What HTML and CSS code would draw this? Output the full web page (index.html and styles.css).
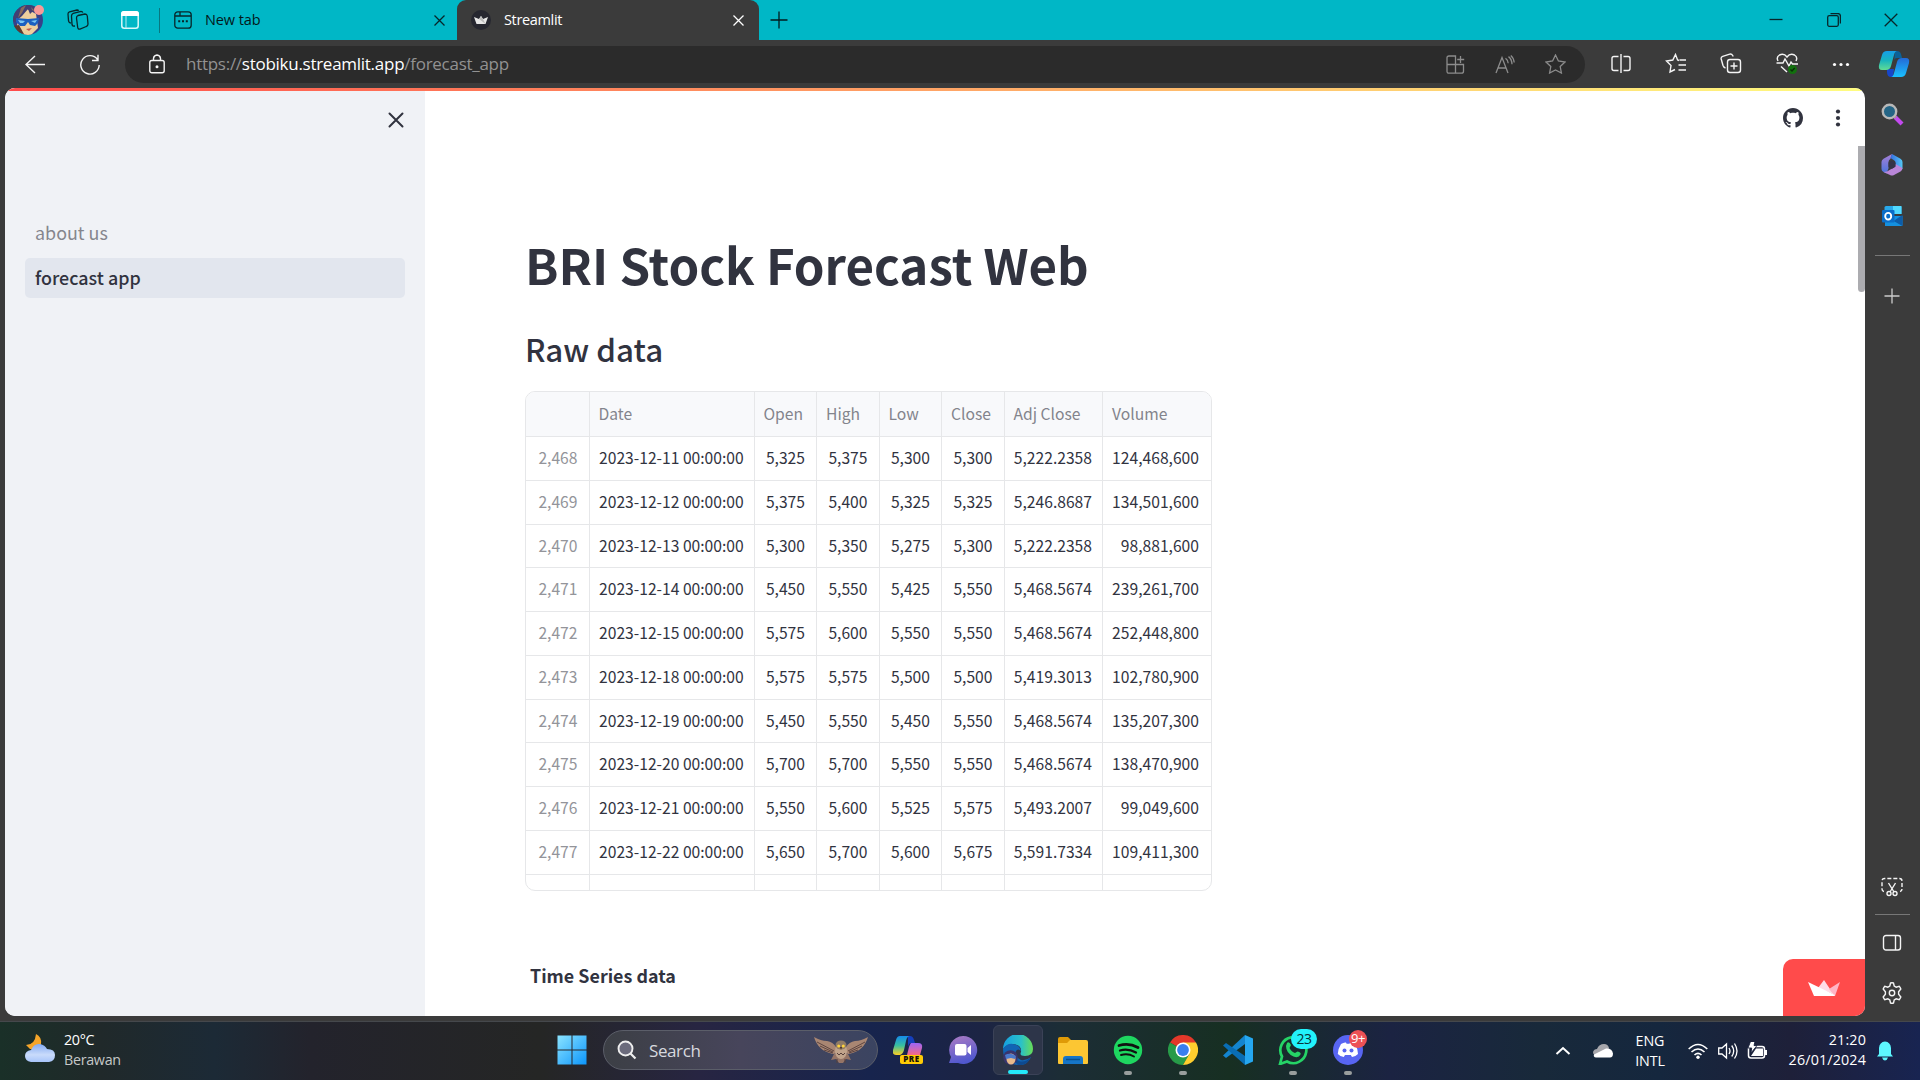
FILE: index.html
```html
<!DOCTYPE html>
<html lang="en">
<head>
<meta charset="utf-8">
<title>Streamlit</title>
<link rel="stylesheet" href="styles.css">
</head>
<body>
<div class="desktop">
<header class="tabstrip">
  <svg class="avatar" width="32" height="32" viewBox="0 0 32 32"><clipPath id="av"><circle cx="16" cy="16" r="15"/></clipPath><g clip-path="url(#av)"><rect width="32" height="32" fill="#38418a"/><path d="M7 9 15 5l9 5 2 14-8 8h-6L5 22z" fill="#efcf9d"/><path d="M2 0h23l3 12-7-5-3 3-2-5-6 7-7 6-4-1z" fill="#414073"/><path d="M9 4l5-3-4 8-4 5zM19 3l5 5-4-2z" fill="#8a6b5c"/><path d="M1 22l6-1 6 11H3z" fill="#5d3b31"/><path d="M4 14l12 1 11-1-1 5-3 3-5-1-2-3-3 4-5 0-4-4z" fill="#1c5fc0"/><path d="M6 16l7 1-2 2H8zM19 17l6-1-2 3z" fill="#7cc6f3"/><path d="M14 25l6-1-3 3z" fill="#bf594e"/></g><circle cx="27" cy="6" r="5" fill="#f79a98"/></svg>
  <svg class="workspaces ink" width="22" height="22" viewBox="0 0 22 22"><path d="M11 6.500 18 5q2 0 2.300 2l.7 8q0 2-1.800 2.500l-6.200 2.600q-2 .4-2.300-1.600L9.500 9q0-2 1.500-2.500zM8 17l-1.500.2q-1.200-.2-1.500-1.700L4.500 7q0-2 1.700-2.600L14 2.400q1.500 0 1.800 1.200M4 14l-1.300-.3Q1.700 13 1.500 11.700L1 5q0-1.700 1.500-2.200L10 1q1.300 0 1.700.7"/></svg>
  <svg class="verticaltabs" width="18" height="18" viewBox="0 0 18 18"><rect x=".8" y=".8" width="16.400" height="16.400" rx="2.500" fill="none" stroke="#d9f8fa" stroke-width="1.500"/><path d="M0 5V3q0-3 3-3h12q3 0 3 3v2z" fill="#fff"/><path d="M5 5v12" stroke="#b8eef2"/></svg>
  <i class="rule"></i>
  <div class="tab idle">
    <svg class="ink" width="18" height="18" viewBox="0 0 18 18"><rect x=".8" y=".8" width="16.400" height="16.400" rx="3"/><path d="M1 5h5V1M6 5h11"/><path d="M4.200 10.200h2M8 10.200h2M11.800 10.200h2" stroke-width="2"/></svg>
    <span>New tab</span>
    <svg class="x ink" width="11" height="11" viewBox="0 0 11 11"><path d="m.5.500 10 10m0-10-10 10"/></svg>
  </div>
  <div class="tab active">
    <svg width="20" height="20" viewBox="0 0 20 20"><circle cx="10" cy="10" r="10" fill="#262730"/><path d="m3 7 5 2 2-3 2 3 5-2-2.500 7h-9z" fill="#e8e8e8"/><path d="m8 9 2-3 2 3 2.500 5z" fill="#bbb"/></svg>
    <span>Streamlit</span>
    <svg class="x" width="11" height="11" viewBox="0 0 11 11"><path d="m.5.500 10 10m0-10-10 10" stroke="#fff" stroke-width="1.300"/></svg>
  </div>
  <svg class="newtab ink" width="18" height="18" viewBox="0 0 18 18"><path d="M9 .5v17M.5 9h17"/></svg>
  <div class="window-buttons">
    <svg class="ink" width="14" height="14" viewBox="0 0 14 14"><path d="M.5 6.500h13"/></svg>
    <svg class="ink" width="14" height="14" viewBox="0 0 14 14"><rect x=".7" y="2.700" width="10.600" height="10.600" rx="1.500"/><path d="M3.500.6H11q2.400 0 2.400 2.400v7.500"/></svg>
    <svg class="ink" width="14" height="14" viewBox="0 0 14 14"><path d="m.7.700 12.600 12.600m0-12.600L.7 13.300"/></svg>
  </div>
</header>

<nav class="toolbar">
  <svg class="back light" width="20" height="19" viewBox="0 0 20 19"><path d="M20 9.500H1M10 1 1 9.500l9 8.500"/></svg>
  <svg class="reload light" width="20" height="21" viewBox="0 0 20 21"><path d="M17.500 5.500A9.200 9.200 0 1 0 19.200 11M18 .8v5.700h-6"/></svg>
  <div class="omnibox">
    <svg class="lock light" width="16" height="20" viewBox="0 0 16 20"><rect x=".8" y="6.500" width="14.400" height="12.300" rx="2"/><path d="M4.500 6.500V4.300q.4-3 3.500-3.300 3.100.3 3.500 3.300v2.200"/><circle cx="8" cy="12.700" r=".8" fill="#fff"/></svg>
    <span class="url">https://<b>stobiku.streamlit.app</b>/forecast_app</span>
    <svg class="dim" width="19" height="19" viewBox="0 0 19 19"><path d="M1 9.500h16.500v6.700q0 2-2 2h-12.500q-2 0-2-2V3q0-2 2-2H9.500v17M14.500 1v7M11.200 4.500h7"/></svg>
    <svg class="dim" width="20" height="19" viewBox="0 0 20 19"><path d="m1 18 6-15.500L13 18M3 13h8M10.500 3.300q2.500 1.700 2.700 5M13.500 1.600q3.300 2.400 3.500 7.700M15.800.5q3 2.500 3.400 7"/></svg>
    <svg class="dim" width="21" height="20" viewBox="0 0 21 20"><path d="m10.500 1 2.900 6 6.600 1-4.800 4.500 1.200 6.500-5.900-3.100L4.600 19l1.200-6.500L1 8l6.600-1z"/></svg>
  </div>
  <div class="tools">
    <svg class="light" width="22" height="22" viewBox="0 0 22 22"><path d="M8.500 3.500H4q-2 0-2 2v10q0 2 2 2h4.500M13.500 3.500H18q2 0 2 2v10q0 2-2 2h-4.500M11 1v19"/></svg>
    <svg class="light" width="22" height="22" viewBox="0 0 22 22"><path d="M14 7.500 12.600 7 10.500 1.500 7.800 7 1.500 8l4.500 4.500L5 19l5-2.500M14.500 7H21M13.500 12H21M13.500 17H21"/></svg>
    <svg class="light" width="22" height="22" viewBox="0 0 22 22"><rect x="7.500" y="6.500" width="13" height="13" rx="2.500"/><path d="M14 9.500v7M10.500 13h7M5.500 15Q3.700 14.500 3 12.500L1.200 6q-.4-2 1.500-2.700l7-2.200q2-.4 3 1.400l.5 1"/></svg>
    <svg class="light" width="24" height="24" viewBox="0 0 24 24"><path d="M3 9Q1 5 4.500 3 9 1 12 5q3-4 7.500-2Q23 5 21 9M1.500 11H8l2-4 4 7 2-4 1.500 2H23M6 14.500l6 5.500"/><circle cx="17.500" cy="17.500" r="4.500" fill="#12700e" stroke="none"/><path d="m15.500 17.500 1.500 1.500 2.700-3" stroke="#082f08"/></svg>
    <svg class="more" width="22" height="22" viewBox="0 0 22 22" fill="#fff"><circle cx="4.500" cy="11.500" r="1.600"/><circle cx="11" cy="11.500" r="1.600"/><circle cx="17.500" cy="11.500" r="1.600"/></svg>
    <svg class="copilot" width="32" height="28" viewBox="0 0 32 28"><defs><linearGradient id="c1" x2="0" y2="1"><stop stop-color="#169ee8"/><stop offset=".5" stop-color="#19b4bd"/><stop offset="1" stop-color="#61dc94"/></linearGradient><linearGradient id="c2" x2="0" y2="1"><stop stop-color="#2469d6"/><stop offset="1" stop-color="#19c1ff"/></linearGradient></defs><path d="M17 1h2q3 0 4 3l1 4h-5q-3 0-3 4z" fill="#0b6298"/><path d="M9 19h7l-1 8h-2q-4 0-4-5z" fill="#1746ca"/><path d="M9 1h10q-2 0-3 4l-3 11q-1 4-5 4H4q-4 0-3-5L4 5q1-4 5-4z" fill="url(#c1)"/><path d="M23 27H13q2 0 3-4l3-11q1-4 5-4h4q4 0 3 5l-3 10q-1 4-5 4z" fill="url(#c2)"/></svg>
  </div>
</nav>

<div class="browser-body">
  <div class="page">
    <aside class="app-sidebar">
      <svg class="sidebar-close" width="16" height="16" viewBox="0 0 16 16"><path d="m1.500 1.500 13 13m0-13-13 13" stroke="#31333f" stroke-width="2" stroke-linecap="round"/></svg>
      <div class="links"><a>about us</a><a class="current">forecast app</a></div>
    </aside>
    <main class="app-main">
      <div class="app-header">
        <svg width="20" height="20" viewBox="0 0 16 16" fill="#31333f"><path d="M8 0C3.580 0 0 3.580 0 8c0 3.540 2.290 6.530 5.470 7.590.4.070.55-.17.55-.38 0-.19-.01-.82-.01-1.490-2.010.37-2.530-.49-2.690-.94-.09-.23-.48-.94-.82-1.130-.28-.15-.68-.52-.01-.53.63-.01 1.080.58 1.230.82.72 1.210 1.870.87 2.330.66.07-.52.28-.87.51-1.070-1.780-.2-3.640-.89-3.640-3.950 0-.87.31-1.590.82-2.150-.08-.2-.36-1.020.08-2.120 0 0 .67-.21 2.200.82.64-.18 1.320-.27 2-.27s1.360.09 2 .27c1.530-1.040 2.200-.82 2.200-.82.44 1.100.16 1.920.08 2.120.51.56.82 1.270.82 2.150 0 3.070-1.870 3.750-3.650 3.950.29.25.54.73.54 1.480 0 1.070-.01 1.930-.01 2.200 0 .21.15.46.55.38A8.010 8.010 0 0 0 16 8c0-4.420-3.580-8-8-8z"/></svg>
        <svg width="6" height="20" viewBox="0 0 6 20" fill="#31333f"><circle cx="3" cy="3.500" r="2.100"/><circle cx="3" cy="10" r="2.100"/><circle cx="3" cy="16.500" r="2.100"/></svg>
      </div>
      <h1>BRI Stock Forecast Web</h1>
      <h2>Raw data</h2>
      <table class="frame">
        <thead><tr><th></th><th>Date</th><th>Open</th><th>High</th><th>Low</th><th>Close</th><th>Adj Close</th><th>Volume</th></tr></thead>
        <tbody>
        <tr><td>2,468</td><td>2023-12-11 00:00:00</td><td>5,325</td><td>5,375</td><td>5,300</td><td>5,300</td><td>5,222.2358</td><td>124,468,600</td></tr>
        <tr><td>2,469</td><td>2023-12-12 00:00:00</td><td>5,375</td><td>5,400</td><td>5,325</td><td>5,325</td><td>5,246.8687</td><td>134,501,600</td></tr>
        <tr><td>2,470</td><td>2023-12-13 00:00:00</td><td>5,300</td><td>5,350</td><td>5,275</td><td>5,300</td><td>5,222.2358</td><td>98,881,600</td></tr>
        <tr><td>2,471</td><td>2023-12-14 00:00:00</td><td>5,450</td><td>5,550</td><td>5,425</td><td>5,550</td><td>5,468.5674</td><td>239,261,700</td></tr>
        <tr><td>2,472</td><td>2023-12-15 00:00:00</td><td>5,575</td><td>5,600</td><td>5,550</td><td>5,550</td><td>5,468.5674</td><td>252,448,800</td></tr>
        <tr><td>2,473</td><td>2023-12-18 00:00:00</td><td>5,575</td><td>5,575</td><td>5,500</td><td>5,500</td><td>5,419.3013</td><td>102,780,900</td></tr>
        <tr><td>2,474</td><td>2023-12-19 00:00:00</td><td>5,450</td><td>5,550</td><td>5,450</td><td>5,550</td><td>5,468.5674</td><td>135,207,300</td></tr>
        <tr><td>2,475</td><td>2023-12-20 00:00:00</td><td>5,700</td><td>5,700</td><td>5,550</td><td>5,550</td><td>5,468.5674</td><td>138,470,900</td></tr>
        <tr><td>2,476</td><td>2023-12-21 00:00:00</td><td>5,550</td><td>5,600</td><td>5,525</td><td>5,575</td><td>5,493.2007</td><td>99,049,600</td></tr>
        <tr><td>2,477</td><td>2023-12-22 00:00:00</td><td>5,650</td><td>5,700</td><td>5,600</td><td>5,675</td><td>5,591.7334</td><td>109,411,300</td></tr>
        <tr class="cut"><td></td><td></td><td></td><td></td><td></td><td></td><td></td><td></td></tr>
        </tbody>
      </table>
      <p class="chart-title">Time Series data</p>
      <i class="scroll-thumb"></i>
      <div class="hosted"><svg width="32" height="18" viewBox="0 0 32 18"><path d="m10 9 6-8 6 9 5 6z" fill="#ffdce6"/><path d="m21 10 11-7-5 14z" fill="#ffb5c5"/><path d="m0 3 27 13-.5 1H6z" fill="#fff"/></svg></div>
    </main>
    <i class="gradient"></i>
  </div>

  <aside class="edge-bar">
    <svg width="24" height="24" viewBox="0 0 24 24"><path d="m15 15 7 7" stroke="#c34af0" stroke-width="4.200"/><path d="m13 13 3 3" stroke="#999" stroke-width="2"/><circle cx="9.500" cy="9.500" r="6.700" fill="#246586" stroke="#b8b8b8" stroke-width="2.400"/></svg>
    <svg width="24" height="24" viewBox="0 0 24 24"><defs><linearGradient id="m1" x2="0" y2="1"><stop stop-color="#a77fd6"/><stop offset="1" stop-color="#4a74dc"/></linearGradient><linearGradient id="m2" x2="1"><stop stop-color="#356de0"/><stop offset="1" stop-color="#54c7f5"/></linearGradient></defs><path d="M12 1 3.500 5.800Q1.500 7 1.500 9v7q0 2 2 3l3 1.500 2-5V9q0-2 2-3.200z" fill="url(#m1)"/><path d="m12 1 8.500 4.800q2 1.200 2 3.200v7l-7-4V9.500q0-1.500-1.500-2.300L10.500 5z" fill="url(#m2)"/><path d="M22.500 15q0 2-2 3.500L14 22q-2 1.200-4 0l-6.500-3q4 0 6-2l4.500-2.500q1.500-1 1.500-3.500z" fill="#b986d8"/><path d="M8.500 9.500 12 7.700l3.500 2v4L12 15.800l-3.500-2z" fill="#343447"/></svg>
    <svg width="24" height="24" viewBox="0 0 24 24"><path d="M6 2h14q1.500 0 1.500 1.500V10h-17V3.500Q4.500 2 6 2z" fill="#28a8ea"/><path d="M13 2h8.500v8H13z" fill="#50d9ff"/><path d="M5 12h17.500v9q0 1-1 1H5z" fill="#1490df"/><path d="m22.500 11-9 6 9 5z" fill="#0d5ca8"/><rect x="2" y="6" width="12.500" height="12.500" rx="1" fill="#0a6dc8"/><ellipse cx="8.200" cy="12.200" rx="3" ry="3.300" fill="none" stroke="#fff" stroke-width="1.900"/></svg>
    <i class="divider"></i>
    <svg class="plus" width="16" height="16" viewBox="0 0 16 16"><path d="M8 .5v15M.5 8h15" stroke="#ccc" stroke-width="1.300"/></svg>
    <svg class="light snip" width="24" height="24" viewBox="0 0 24 24"><path stroke-dasharray="4 2" d="M4 16.500Q2 16 2 14V6q0-2.500 2.500-2.500h15Q22 3.500 22 6v8q0 2-2 2.500"/><path d="m8.500 8 5.500 9M15.500 8 10 17"/><circle cx="9" cy="18.500" r="2"/><circle cx="15" cy="18.500" r="2"/></svg>
    <i class="divider low"></i>
    <svg class="light" width="20" height="18" viewBox="0 0 20 18"><rect x="1.500" y="1.500" width="17" height="14.500" rx="2.500"/><path d="M13.500 1.500V16"/></svg>
    <svg class="light gear" width="24" height="24" viewBox="0 0 24 24"><path d="M9.800 5 10.500 2q1.500-.4 3 0l.7 3 2 1.200 3-.9q1.200 1.200 1.600 2.700L18.600 10.800v2.400l2.200 2.800q-.5 1.500-1.600 2.700l-3-.9-2 1.200-.7 3q-1.500.4-3 0l-.7-3-2-1.200-3 .9Q3.700 17.500 3.200 16l2.200-2.800v-2.400L3.200 8q.5-1.500 1.600-2.700l3 .9z"/><circle cx="12" cy="12" r="2.700"/></svg>
  </aside>
</div>

<footer class="taskbar">
  <div class="weather">
    <svg width="30" height="30" viewBox="0 0 30 30"><path d="M11 1q6 3 5 10-3 7-11 5l-4-4q9 0 10-11z" fill="#f5a52a"/><defs><linearGradient id="cl" x2="0" y2="1"><stop stop-color="#82aaf0"/><stop offset=".6" stop-color="#c9dbfb"/><stop offset="1" stop-color="#a8c5fa"/></linearGradient></defs><path d="M6 29q-6-1-6-6t6-6q3-7 9-6 5 1 7 5 8 0 8 6t-6 7z" fill="url(#cl)"/></svg>
    <div><span>20°C</span><span class="muted">Berawan</span></div>
  </div>
  <svg class="start" width="30" height="30" viewBox="0 0 30 30"><defs><linearGradient id="w" x2="1" y2="1"><stop stop-color="#8be4ff"/><stop offset="1" stop-color="#0c95fb"/></linearGradient></defs><path fill="url(#w)" d="M.5.500h14v14H.5zM15.500.500h14v14h-14zM.5 15.500h14v14H.5zM15.500 15.500h14v14h-14z"/></svg>
  <div class="search">
    <svg width="20" height="20" viewBox="0 0 20 20"><circle cx="8.500" cy="8.500" r="7" fill="#6b6b7c" stroke="#eee" stroke-width="1.900"/><path d="m13.500 13.500 5 5" stroke="#eee" stroke-width="2.200"/></svg>
    <span>Search</span>
    <svg class="owl" width="56" height="28" viewBox="0 0 56 28"><path d="M1 1q7 4 13 4 6 1 9 6l2 6-5 1Q5 15 1 1zM55 1q-7 4-13 4-6 1-9 6l-2 6 5 1Q51 15 55 1z" fill="#a98672"/><path d="m4 6 17 9M7 10l13 6M52 6l-17 9m14-5-13 6M11 14l9 3m25-3-9 3" stroke="#5d4541" stroke-width="1"/><path d="m21 18-3 6 5-1 3 4h4l3-4 5 1-3-6z" fill="#957466"/><ellipse cx="28" cy="15" rx="6" ry="8" fill="#c0a38b"/><ellipse cx="28" cy="9" rx="5.500" ry="4.500" fill="#8f7b66"/><circle cx="25.700" cy="10" r="1.500" fill="#ffd43c"/><circle cx="30.300" cy="10" r="1.500" fill="#ffd43c"/><path d="m27 11 1 3 1-3z" fill="#493022"/><path d="m24 17 2 2 2-2 2 2 2-2m-8 6v4m8-4v4" stroke="#57403b" fill="none"/></svg>
  </div>
  <div class="apps">
    <div class="app"><svg width="30" height="30" viewBox="0 0 30 30"><defs><linearGradient id="p1" x2="0" y2="1"><stop stop-color="#158bea"/><stop offset=".5" stop-color="#38bfa0"/><stop offset="1" stop-color="#fccf22"/></linearGradient><linearGradient id="p2" x2="0" y2="1"><stop stop-color="#9c65f5"/><stop offset="1" stop-color="#f66a87"/></linearGradient></defs><path d="M15 1h2q3 0 4 4l1 3h-4q-2 0-3 4z" fill="#153fbd"/><path d="M7 1h10q-3 0-4 5l-2 9q-1 4-4 5H3q-4 0-3-5L3 5q1-4 4-4z" fill="url(#p1)"/><path d="M18 8h7q5 0 4 5l-2 7H14l2-8q1-3 2-4z" fill="url(#p2)"/><rect x="7" y="20" width="23" height="9" rx="2" fill="#ffcb05"/><text class="pre" x="18.500" y="27.400" text-anchor="middle">PRE</text></svg></div>
    <div class="app"><svg width="30" height="30" viewBox="0 0 30 30"><defs><linearGradient id="ch" x2=".3" y2="1"><stop stop-color="#ad7cc3"/><stop offset="1" stop-color="#5058cf"/></linearGradient></defs><path d="M15 1a14 14 0 1 1-5 27H1l2-6A14 14 0 0 1 15 1z" fill="url(#ch)"/><rect x="7" y="9" width="11.500" height="11.500" rx="2" fill="#fff"/><path d="m19.500 13 3.500-3v10l-3.500-3z" fill="#fff"/></svg></div>
    <div class="app selected"><svg width="30" height="30" viewBox="0 0 30 30"><defs><linearGradient id="e1" x2="1"><stop stop-color="#159fe1"/><stop offset=".6" stop-color="#2ac1c9"/><stop offset="1" stop-color="#68dd55"/></linearGradient></defs><path d="M0 14A15 15 0 0 1 30 14q0 7-8 7-6 0-4-4 1-7-8-8Q4 9 0 14z" fill="url(#e1)"/><path d="M0 14q4-6 10-5 7 1 8 7-3-3-5 0-2 6 5 9 5 1 10-3-4 9-13 8Q0 29 0 14z" fill="#1164b4"/><path d="M13 16q-4 6 3 10 6 2 12-4-4 9-13 8-7-6-2-14z" fill="#0e4a90"/><circle cx="7.500" cy="22.500" r="7.300" fill="#39356d"/><ellipse cx="8" cy="24" rx="4.500" ry="5.500" fill="#e8ba8c"/><path d="M2 20q5-3 11 1l-1 3-4-1-5 1z" fill="#4978ca"/></svg><i class="run"></i></div>
    <div class="app"><svg width="30" height="30" viewBox="0 0 30 30"><path d="M0 4q0-2 2-2h8l3 3v6H0z" fill="#df9a07"/><path d="M12 5h16q2 0 2 2v21q0 1-1 1H1q-1 0-1-1V8h9z" fill="#fcc633"/><path d="M5 29v-5q0-3 3-3h14q3 0 3 3v5z" fill="#1675c7"/><path d="M8 24.500h14" stroke="#08508f" stroke-width="1.500"/></svg></div>
    <div class="app"><svg width="30" height="30" viewBox="0 0 30 30" fill="none" stroke="#111" stroke-linecap="round"><circle cx="15" cy="15" r="14.200" fill="#1ed760" stroke="none"/><path d="M6 10.500q10-3 19 2" stroke-width="2.800"/><path d="M7 15.500q8-2.500 16 2" stroke-width="2.300"/><path d="M8 20q7-2 13 1.500" stroke-width="1.900"/></svg><i class="run"></i></div>
    <div class="app"><svg width="30" height="30" viewBox="0 0 30 30"><path d="M15 15 2 7.500A15 15 0 0 1 28 7.500z" fill="#e3382a"/><path d="M15 15 2 7.500A15 15 0 0 0 15 30l6.500-11z" fill="#279b48"/><path d="M15 15l6.500 3.800L15 30A15 15 0 0 0 28 7.500H15z" fill="#ffce2e"/><circle cx="15" cy="15" r="7.500" fill="#fff"/><circle cx="15" cy="15" r="5.900" fill="#397fee"/></svg><i class="run"></i></div>
    <div class="app"><svg width="30" height="30" viewBox="0 0 30 30"><path d="M22 0v9L3 23 0 20.500z" fill="#1485cf"/><path d="m3 8 19 13v9L0 10.500z" fill="#096db4"/><path d="m22 0 8 3.500v23L22 30z" fill="#25a7f0"/></svg></div>
    <div class="app"><svg width="30" height="30" viewBox="0 0 30 30"><path d="M2 29 4 21.500A13 13 0 1 1 9 26.500z" fill="none" stroke="#25d366" stroke-width="2.700"/><path d="M9 8q2-2 4 2l-1.500 3q2 4 5.500 5l2.500-1.500q4 1 3 3-2 4-7 2Q8 18 8 11z" fill="#25d366"/></svg><span class="count">23</span><i class="run"></i></div>
    <div class="app"><svg width="30" height="30" viewBox="0 0 30 30"><circle cx="15" cy="15" r="15" fill="#5865f2"/><path d="M8 9q3-2 5-1.500l.6 1.200h3L17 7.500q3 0 5 1.500 3 5 3 10-3 3-6 3l-1.200-2H12l-1.200 2q-3 0-6-3 0-5 3.200-10z" fill="#fff"/><circle cx="11.500" cy="15.500" r="2" fill="#5865f2"/><circle cx="18.500" cy="15.500" r="2" fill="#5865f2"/></svg><span class="count alert">9+</span><i class="run"></i></div>
  </div>
  <div class="tray">
    <svg width="16" height="10" viewBox="0 0 16 10"><path d="m1.500 8 6.500-6 6.500 6" fill="none" stroke="#fff" stroke-width="2"/></svg>
    <svg class="cloud" width="20" height="14" viewBox="0 0 20 14"><path d="M4 12q-4-1-4-4 1-3 4-3 2-5 7-5 4 0 5 4l-3 8z" fill="#a6a6ab"/><path d="M3 13.500q-3-.5-2-3l12-6q6-.5 7 5 0 4-3 4z" fill="#fff"/></svg>
    <div class="lang"><span>ENG</span><span>INTL</span></div>
    <svg class="wifi" width="20" height="18" viewBox="0 0 20 18" fill="none" stroke="#fff" stroke-width="1.600"><path d="M.7 7q9.300-9 18.600 0M3.500 10q6.500-6 13 0M6.500 13q3.500-3.300 7 0"/><circle cx="10" cy="15.200" r="1.700" fill="#fff" stroke="none"/></svg>
    <svg class="vol" width="20" height="18" viewBox="0 0 20 18" fill="none" stroke="#fff" stroke-width="1.300"><path d="M.7 6H4l4.500-4v14L4 12H.7zM11 6q2 3 0 6M13.700 3.500q4 5.500 0 11M16.500 1.500q5 7.500 0 15"/></svg>
    <svg class="batt" width="21" height="18" viewBox="0 0 21 18"><rect x="1.500" y="4.500" width="16" height="11.500" rx="2.500" fill="none" stroke="#fff" stroke-width="1.500"/><path d="M9 6.500h7v7.500H4zM18 8h2v5h-2z" fill="#fff"/><path d="M3.500-.5 8-.5 7 3.500h3L4 11l.7-5H1z" fill="#fff" stroke="#18213c" stroke-width=".9"/></svg>
    <div class="clock"><span>21:20</span><span>26/01/2024</span></div>
    <svg class="bell" width="16" height="20" viewBox="0 0 16 20" fill="#5df7ff"><path d="M0 15.500 2 13V7q.5-6 6-6.500 5.500.5 6 6.500v6l2 2.500zM5 16.500h6q-1 3-3 3t-3-3z"/></svg>
  </div>
</footer>
</div>
</body>
</html>
```
FILE: styles.css
```css
* { box-sizing: border-box; }
body { margin: 0; font-family: "Open Sans", "Noto Sans", sans-serif; }
svg { display: block; flex: none; }
i { display: block; flex: none; }
.desktop { width: 1920px; height: 1080px; overflow: hidden; display: flex; flex-direction: column; background: #3b3b3b; }
.ink { fill: none; stroke: #07262a; stroke-width: 1.3; }
.light { fill: none; stroke: #f4f4f4; stroke-width: 1.4; }
.dim { fill: none; stroke: #8c8c8c; stroke-width: 1.3; }

/* tab strip */
.tabstrip { height: 40px; flex: none; display: flex; align-items: center; padding-left: 12px; background: #00b7c6; }
.workspaces { margin-left: 22.500px; }
.verticaltabs { margin-left: 32.500px; }
.rule { width: 1px; height: 25px; margin-left: 20px; background: #087780; }
.tab { height: 40px; display: flex; align-items: center; font-size: 14.5px; letter-spacing: -.1px; }
.tab span { padding-bottom: 2px; }
.tab .x { margin-left: auto; }
.tab.idle { width: 297px; padding: 0 12px 0 14px; color: #04191b; }
.tab.idle span { margin-left: 13px; }
.tab.active { width: 302px; padding: 0 15px 0 14px; background: #3b3b3b; color: #fff; border-radius: 9px 9px 0 0; }
.tab.active span { margin-left: 13px; letter-spacing: -.35px; }
.newtab { margin-left: 11px; stroke: #001c1f; }
.window-buttons { display: flex; gap: 43.500px; margin-left: auto; padding-right: 22px; }

/* address bar */
.toolbar { height: 48px; flex: none; display: flex; align-items: center; padding: 0 10px 0 25px; }
.reload { margin-left: 35px; }
.omnibox { margin-left: 25px; width: 1460px; height: 37px; padding: 0 19.500px 0 24px; border-radius: 19px; background: #2b2b2b; display: flex; align-items: center; gap: 30px; }
.url { flex: 1; color: #929292; font-size: 17px; letter-spacing: -.27px; margin-left: -9px; padding-bottom: 2px; }
.url b { font-weight: 400; color: #fff; }
.tools { display: flex; align-items: center; margin-left: 24.500px; gap: 33px; }
.tools .more { margin-left: -2px; }
.tools .copilot { margin-left: -7px; }

/* page */
.browser-body { height: 933px; flex: none; display: flex; padding: 0 0 5px 5px; }
.page { position: relative; width: 1860px; height: 928px; display: flex; border-radius: 10px; overflow: hidden; background: #fff; font-family: "Noto Sans CJK SC", sans-serif; color: #31333f; }
.gradient { position: absolute; top: 0; left: 0; width: 100%; height: 3px; background: linear-gradient(90deg, #ff4b4b, #fffd80); }
.app-sidebar { width: 420px; flex: none; background: #f0f2f6; padding: 24px 20px 0; display: flex; flex-direction: column; }
.sidebar-close { align-self: flex-end; margin-right: 1.500px; }
.links { display: flex; flex-direction: column; gap: 5px; margin-top: 85px; font-size: 17.9px; }
.links a { height: 40px; line-height: 38px; padding: 0 10px; border-radius: 5px; color: #85868d; }
.links .current { background: #e2e6ee; color: #31333f; font-weight: 500; }
.app-main { flex: 1; padding-left: 100px; display: flex; flex-direction: column; align-items: flex-start; }
.app-header { align-self: stretch; height: 60px; display: flex; justify-content: flex-end; align-items: center; gap: 31.500px; padding-right: 24.500px; }
h1 { margin: 83px 0 0; font-size: 49.2px; line-height: 66px; font-weight: 700; letter-spacing: 0; }
h2 { margin: 31px 0 0; font-size: 31.3px; line-height: 42px; font-weight: 500; }
.frame { display: block; margin-top: 21px; width: 687px; height: 500px; overflow: hidden; border: 1px solid #e6e7e9; border-radius: 10px; font-size: 15.66px; }
.frame thead, .frame tbody { display: block; }
.frame tr { display: grid; grid-template-columns: 63.500px 165px repeat(4, 62.5px) 98.500px 109px; height: 43.750px; }
.frame thead tr { height: 45px; background: #f8f9fb; }
.frame th, .frame td { padding: 0 11px 0 9px; border: solid #e6e7e9; border-width: 0 1px 1px 0; line-height: 42px; white-space: nowrap; text-align: right; }
.frame th { color: #83848c; font-weight: 400; text-align: left; line-height: 44px; }
.frame td:first-child { color: #93949a; }
.frame td:nth-child(2) { text-align: left; padding-left: 9.500px; }
.frame td:nth-child(7) { padding-right: 10px; }
.frame td:last-child { padding-right: 12px; }
.chart-title { margin: 69px 0 0 5px; font-size: 17.9px; line-height: 30px; font-weight: 700; }
.scroll-thumb { position: absolute; right: 0; top: 58px; width: 7px; height: 146px; background: #acacb0; border-radius: 0 0 4px 4px; }
.hosted { position: absolute; right: 0; bottom: 0; width: 82px; height: 57px; padding: 20px 0 0 25px; background: #ff4b4b; border-radius: 10px 0 0; }

.edge-bar { flex: 1; display: flex; flex-direction: column; align-items: center; padding: 14px 1px 0 0; gap: 27px; }
.divider { width: 35px; height: 1px; background: #777; }
.plus { margin-top: 5px; }
.snip { margin-top: auto; }
.divider.low { margin-top: -12px; }
.divider.low + svg { margin-top: -8px; }
.gear { margin: 2px 0 11px; }

/* taskbar */
.taskbar { height: 59px; flex: none; display: flex; align-items: center; padding-bottom: 2px; border-top: 1px solid #45484c; color: #fff; font-size: 14.3px; background: linear-gradient(90deg, #1a3028 0, #20292a 100px, #1c2a36 215px, #23232c 310px, #252625 540px, #272542 700px, #17244d 870px, #1c2444 980px, #1c2d36 1060px, #172f22 1230px, #1b2342 1390px, #18293a 1540px, #15273e 1660px, #1e2039 1790px, #182451 1920px); }
.weather { width: 532px; padding-left: 25px; display: flex; gap: 9px; line-height: 20px; }
.weather div { display: flex; flex-direction: column; margin-top: -1px; letter-spacing: -.3px; }
.weather svg { margin-top: 2.500px; }
.muted { color: #c5c8c8; }
.start { margin-left: 24.500px; }
.search { width: 275px; height: 40px; margin-left: 16.500px; padding: 0 8px 0 13px; display: flex; align-items: center; border: 1px solid #5b5e69; border-radius: 20px; background: linear-gradient(90deg, #3c3f45, #47455b 50%, #3b4461); color: #d7d9df; font-size: 17px; letter-spacing: -.4px; }
.search span { margin-left: 12px; }
.owl { margin-left: auto; }
.apps { display: flex; margin-left: 5px; }
.app { position: relative; width: 50px; height: 50px; margin-right: 5px; display: flex; align-items: center; justify-content: center; border-radius: 6px; }
.app.selected { background: #2d3549; border: 1px solid #3b4257; }
.run { position: absolute; bottom: 0; left: 21px; width: 8px; height: 4px; border-radius: 2px; background: #999e9d; }
.selected .run { left: 14px; width: 20px; background: #24e9fa; }
.count { position: absolute; left: 23px; top: 4px; width: 26px; height: 20px; border-radius: 10px; background: #22f2fb; color: #093238; text-align: center; line-height: 20px; font-size: 14px; letter-spacing: -.5px; }
.count.alert { left: 26px; top: 5px; width: 18px; height: 18px; background: #ed5155; color: #fff; line-height: 17px; font-size: 13px; }
.pre { font: 800 8px "Open Sans", sans-serif; letter-spacing: .5px; fill: #17130a; }
.tray { display: flex; align-items: center; margin-left: auto; padding: 2px 27px 0 0; line-height: 20px; }
.tray .cloud { margin-left: 22px; }
.lang { display: flex; flex-direction: column; align-items: center; width: 32px; margin-left: 21px; letter-spacing: -.1px; }
.wifi { margin-left: 22px; }
.vol { margin-left: 10px; }
.batt { margin-left: 9px; }
.clock { display: flex; flex-direction: column; align-items: flex-end; width: 98px; letter-spacing: .15px; margin-top: -2px; }
.bell { margin-left: 11px; }
```
